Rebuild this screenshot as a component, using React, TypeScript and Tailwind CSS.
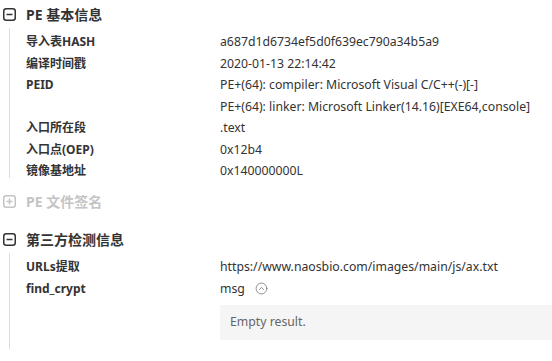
import { CircleChevronUp } from 'lucide-react'
import { PropsWithChildren } from 'react'

const font = { fontFamily: '"Noto Sans", "Noto Sans CJK SC", sans-serif' }

const ToggleIcon = ({ open, muted }: { open: boolean; muted?: boolean }) => (
  <svg
    width="13"
    height="13"
    viewBox="0 0 13 13"
    className={muted ? 'text-[#c4c4c4]' : 'text-[#333]'}
  >
    <rect x="0.75" y="0.75" width="11.5" height="11.5" rx="2.5" fill="none" stroke="currentColor" strokeWidth="1.5" />
    <line x1="3.5" y1="6.5" x2="9.5" y2="6.5" stroke="currentColor" strokeWidth="1.5" />
    {!open && <line x1="6.5" y1="3.5" x2="6.5" y2="9.5" stroke="currentColor" strokeWidth="1.5" />}
  </svg>
)

interface ISectionHeaderProps {
  title: string
  open: boolean
  muted?: boolean
}

const SectionHeader = ({ title, open, muted }: ISectionHeaderProps) => (
  <div className="flex items-center h-[28px] pl-[3px] gap-[10px]">
    <ToggleIcon open={open} muted={muted} />
    <span className={'text-[14px] font-bold ' + (muted ? 'text-[#c4c4c4]' : 'text-[#333]')}>{title}</span>
  </div>
)

const Row = ({ label, children }: PropsWithChildren<{ label?: string }>) => (
  <div className="flex leading-[21.5px]">
    <div className="w-[194px] shrink-0 text-[12px] font-bold text-[#333]">{label}</div>
    <div className="text-[12.25px] text-[#333] whitespace-nowrap">{children}</div>
  </div>
)

const basicInfo = [
  { label: '导入表HASH', value: 'a687d1d6734ef5d0f639ec790a34b5a9' },
  { label: '编译时间戳', value: '2020-01-13 22:14:42' },
  { label: 'PEID', value: 'PE+(64): compiler: Microsoft Visual C/C++(-)[-]' },
  { label: '', value: 'PE+(64): linker: Microsoft Linker(14.16)[EXE64,console]' },
  { label: '入口所在段', value: '.text' },
  { label: '入口点(OEP)', value: '0x12b4' },
  { label: '镜像基地址', value: '0x140000000L' },
]

export default function App() {
  return (
    <div className="w-[552px] h-[361px] bg-white overflow-hidden" style={font}>
      <SectionHeader title="PE 基本信息" open />
      <div className="ml-[9px] border-l border-[#dcdcdc] pl-[16px] pt-[3px] pb-0 h-[150px]">
        {basicInfo.map((item, i) => (
          <Row key={i} label={item.label}>
            {item.value}
          </Row>
        ))}
      </div>

      <div className="mt-[9px]">
        <SectionHeader title="PE 文件签名" open={false} muted />
      </div>

      <div className="mt-[10px]">
        <SectionHeader title="第三方检测信息" open />
        <div className="ml-[9px] border-l border-[#dcdcdc] pl-[16px] pt-[3px] pb-[9px]">
          <Row label="URLs提取">https://www.naosbio.com/images/main/js/ax.txt</Row>
          <Row label="find_crypt">
            <span className="flex items-center gap-[10px]">
              msg
              <CircleChevronUp size={13} strokeWidth={1.5} className="text-[#777]" />
            </span>
          </Row>
          <div className="ml-[194px] mt-[6px] h-[35px] bg-[#f5f5f5] pl-[10px] flex items-center text-[12.25px] text-[#666]">
            Empty result.
          </div>
        </div>
      </div>
    </div>
  )
}
